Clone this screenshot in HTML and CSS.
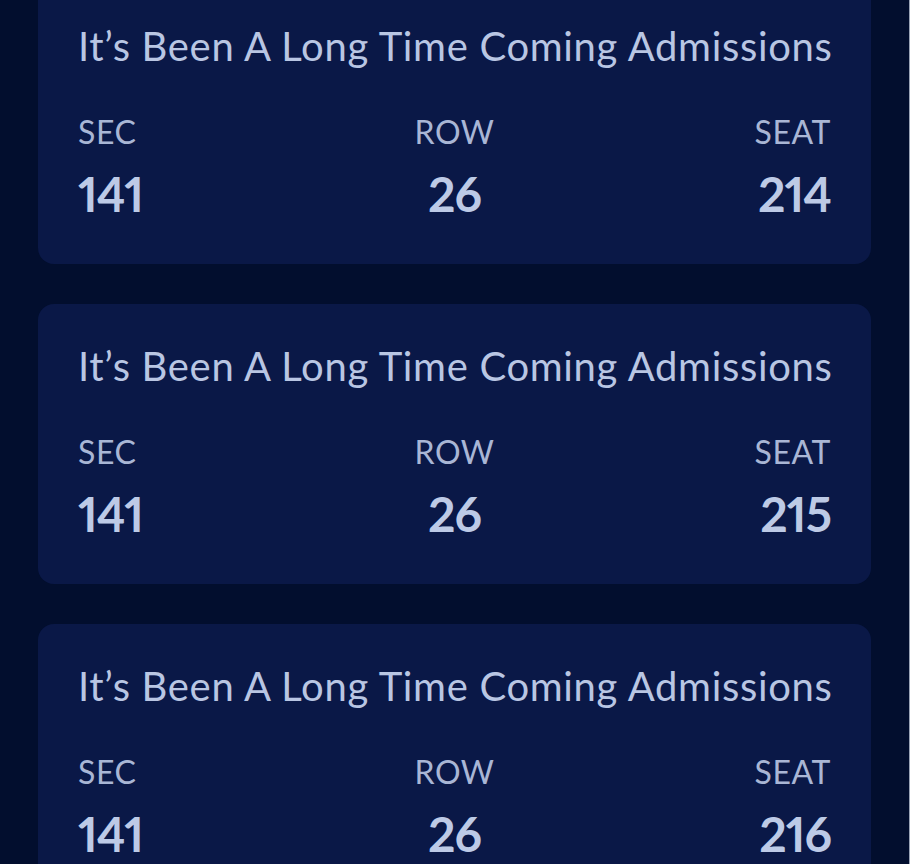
FILE: index.html
```html
<!DOCTYPE html>
<html>
<head>
<meta charset="utf-8">
<link rel="stylesheet" href="styles.css">
</head>
<body>
<div class="list">
  <div class="card">
    <div class="title">It’s Been A Long Time Coming Admissions</div>
    <div class="grid">
      <div class="label">SEC</div><div class="label mid">ROW</div><div class="label end">SEAT</div>
      <div class="num">141</div><div class="num mid">26</div><div class="num end">214</div>
    </div>
  </div>
  <div class="card">
    <div class="title">It’s Been A Long Time Coming Admissions</div>
    <div class="grid">
      <div class="label">SEC</div><div class="label mid">ROW</div><div class="label end">SEAT</div>
      <div class="num">141</div><div class="num mid">26</div><div class="num end">215</div>
    </div>
  </div>
  <div class="card">
    <div class="title">It’s Been A Long Time Coming Admissions</div>
    <div class="grid">
      <div class="label">SEC</div><div class="label mid">ROW</div><div class="label end">SEAT</div>
      <div class="num">141</div><div class="num mid">26</div><div class="num end">216</div>
    </div>
  </div>
</div>
</body>
</html>
```
FILE: styles.css
```css
html, body {
  margin: 0;
  padding: 0;
  background: #020e2e;
  height: 864px;
  overflow: hidden;
}
body {
  font-family: "Lato", "Liberation Sans", sans-serif;
  border-right: 1px solid #9aa3b6;
  box-sizing: border-box;
  width: 910px;
}
.list {
  display: flex;
  flex-direction: column;
  gap: 40px;
  margin-top: -16px;
  padding: 0 38px;
}
.card {
  background: #0a1847;
  border-radius: 16px;
  padding: 38px 40px 41px;
  color: #b9c6e3;
}
.title {
  font-size: 40px;
  line-height: 48px;
  white-space: nowrap;
  letter-spacing: 0.68px;
}
.grid {
  display: grid;
  grid-template-columns: 1fr 1fr 1fr;
  margin-top: 43px;
}
.label {
  font-size: 32px;
  line-height: 38px;
  color: #a9b6d5;
  margin-bottom: 14px;
  letter-spacing: 0.6px;
}
.num {
  font-size: 48px;
  line-height: 58px;
  font-weight: 700;
  color: #bdcae6;
  font-variant-numeric: proportional-nums;
  letter-spacing: -1px;
}
.mid { text-align: center; }
.end { text-align: right; }
```
